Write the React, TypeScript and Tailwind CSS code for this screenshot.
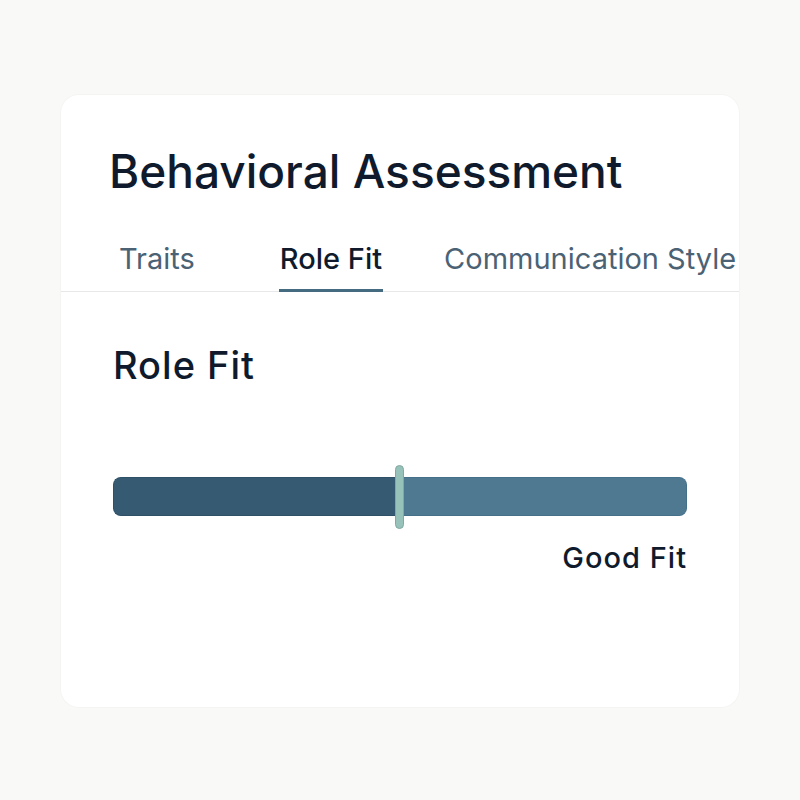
export default function App() {
  const font = { fontFamily: "Inter, 'Noto Sans', sans-serif" };
  return (
    <div className="min-h-screen w-full bg-[#f9f9f8] pt-[95px]" style={font}>
      <div className="mx-auto h-[612px] w-[678px] overflow-hidden rounded-[18px] bg-white shadow-[0_0_0_1px_rgba(0,0,0,0.02)]">
        <h1 className="px-[48px] pt-[53px] text-[46px] font-medium leading-none text-[#0f1b2d]">
          Behavioral Assessment
        </h1>

        <div className="mt-[50px] flex border-b border-[#e6e8ea] text-[29px] leading-none">
          <button className="ml-[58px] -mb-px border-b-[3px] border-transparent pb-[16px] text-[#4b6275]">
            Traits
          </button>
          <button className="ml-[84px] -mb-px border-b-[3px] border-[#456b80] px-[1px] pb-[16px] font-medium text-[#0f1b2d]">
            Role Fit
          </button>
          <button className="ml-[61px] -mb-px whitespace-nowrap border-b-[3px] border-transparent pb-[16px] text-[#4b6275]">
            Communication Style
          </button>
        </div>

        <div className="px-[52px]">
          <h2 className="mt-[54px] text-[38px] font-medium leading-none tracking-[1px] text-[#0f1b2d]">
            Role Fit
          </h2>

          <div className="relative mt-[93px] flex h-[39px] w-full">
            <div className="h-full w-[286px] rounded-l-[8px] border border-r-0 border-[#2e5168] bg-[#355a72]" />
            <div className="h-full flex-1 rounded-r-[8px] border border-l-0 border-[#45708a] bg-[#4f7991]" />
            <div className="absolute left-[282px] top-[-12px] h-[64px] w-[9px] rounded-full border border-[#7fa9a1] bg-[#97c2ba]" />
          </div>

          <div className="mt-[27px] text-right text-[29px] font-medium leading-none tracking-[1px] text-[#0f1b2d]">
            Good Fit
          </div>
        </div>
      </div>
    </div>
  );
}
